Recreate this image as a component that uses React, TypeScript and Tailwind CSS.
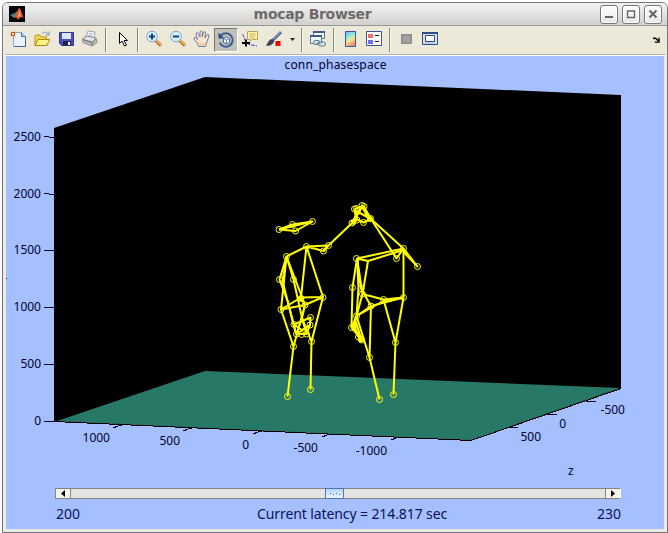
import type { ReactNode } from "react";

type Point = [number, number];

const leftDancer: Point[][] = [
  [[279, 229.5], [292.5, 224.5], [312.5, 221.5], [295.5, 231], [279, 229.5]],
  [[279, 229.5], [312.5, 221.5]],
  [[286.5, 256.5], [306.5, 246.5], [328.5, 245.5], [323.5, 251], [306.5, 246.5]],
  [[323.5, 251], [328.5, 245.5], [352, 223]],
  [[306.5, 246.5], [323, 297], [301, 297.5], [306.5, 246.5]],
  [[286.5, 256.5], [279.5, 279.5], [288, 302], [296, 334]],
  [[286.5, 256.5], [293.5, 279.5], [302, 318]],
  [[286.5, 256.5], [281, 309.5], [301, 297.5]],
  [[286.5, 256.5], [305, 305]],
  [[286.5, 256.5], [282.5, 281], [293.5, 324.5]],
  [[281, 309.5], [305, 305], [323, 297]],
  [[301, 297.5], [305, 305]],
  [[281, 309.5], [293.5, 346.5], [287.5, 396.5]],
  [[323, 297], [311.5, 341.5], [310.5, 389.5]],
  [[293.5, 346.5], [305, 305], [302, 318], [311.5, 341.5]],
  [[293.5, 324.5], [310.5, 317.5], [310, 325], [306.5, 334], [296.5, 334], [293.5, 324.5]],
  [[302, 318], [296.5, 334], [310, 325], [302, 330], [293.5, 324.5]],
  [[302, 318], [306.5, 334]],
];

const rightDancer: Point[][] = [
  [[352, 223], [362, 206], [371, 219], [358, 212], [352, 223]],
  [[354.5, 209], [363.5, 206], [371, 219], [363.5, 222.5], [356, 219], [354.5, 209]],
  [[354.5, 209], [358.5, 214], [362, 206], [366, 214], [371, 219]],
  [[352, 223], [357, 214], [357, 220], [352, 223]],
  [[364, 206.5], [369, 220], [366, 215]],
  [[371, 219], [403.5, 248.5], [417.5, 266.5], [403.5, 252]],
  [[371, 219], [396.5, 258.5], [403.5, 248.5]],
  [[357, 258.5], [403.5, 248.5]],
  [[357, 258.5], [368, 261], [403.5, 250]],
  [[357, 258.5], [352.5, 287.5], [351.5, 327.5]],
  [[357, 258.5], [358.5, 288], [356.5, 316]],
  [[357, 258.5], [362.5, 294], [356.5, 316]],
  [[357, 258.5], [361, 288.5], [371, 306]],
  [[368, 261], [362.5, 294], [383.5, 299.5], [403.5, 297.5]],
  [[356.5, 316], [371, 306], [403.5, 297.5], [403.5, 248.5]],
  [[356.5, 316], [383.5, 301], [403.5, 297.5]],
  [[371, 306], [369.5, 357.5], [379.5, 399.5]],
  [[356.5, 316], [369.5, 357.5]],
  [[383.5, 299.5], [395.5, 342.5], [393.5, 394.5]],
  [[403.5, 297.5], [395.5, 342.5]],
  [[356.5, 316], [351.5, 327.5], [361.5, 340], [356, 322], [354, 329], [358.5, 337], [361.5, 340]],
  [[356.5, 316], [354, 327], [361.5, 340]],
];

const markers: Point[] = [
  [279, 229.5], [292.5, 224.5], [312.5, 221.5], [295.5, 231],
  [286.5, 256.5], [306.5, 246.5], [328.5, 245.5], [323.5, 251],
  [279.5, 279.5], [293.5, 279.5], [281, 309.5], [301, 298.5], [305, 305], [323, 297.5],
  [310.5, 317.5], [294, 324.5], [310, 325], [306.5, 334], [296.5, 334], [301.5, 334.5],
  [293.5, 346.5], [311.5, 341.5], [287.5, 396.5], [310.5, 389.5],
  [354.5, 209], [356.5, 208.5], [362, 205.5], [364, 206.5], [352, 223], [357, 220], [363.5, 222.5], [370.5, 218.5],
  [403.5, 248.5], [396.5, 258.5], [417.5, 266.5], [356.5, 258.5],
  [352.5, 287.5], [361, 288.5], [362.5, 294], [403.5, 297.5], [383.5, 299.5],
  [371, 306], [356.5, 316], [351.5, 327.5], [354.5, 327.5], [358.5, 337], [361.5, 340],
  [369.5, 357.5], [395.5, 342.5], [379.5, 399.5], [393.5, 394.5],
];

// Joints where many limb segments meet read as solid dots.
const knots: Point[] = [[353.5, 222], [370, 219], [354, 327], [361, 339.5], [301, 298.5]];

const leftTicks = [
  { y: 137, label: "2500", drop: 1 },
  { y: 194, label: "2000", drop: 1 },
  { y: 250, label: "1500", drop: 0 },
  { y: 307, label: "1000", drop: 0 },
  { y: 364, label: "500", drop: 0 },
  { y: 421, label: "0", drop: 0 },
];

const floorLabels = [
  { x: 110, y: 441.5, label: "1000" },
  { x: 180, y: 444.5, label: "500" },
  { x: 249, y: 448.5, label: "0" },
  { x: 318, y: 451.5, label: "-500" },
  { x: 387, y: 454.5, label: "-1000" },
  { x: 541, y: 441, label: "500" },
  { x: 566, y: 428, label: "0" },
  { x: 625, y: 414, label: "-500" },
];

const frontTicks: Point[] = [[122, 425], [192, 428], [262, 431], [331, 434], [400, 437]];
const sideTicks: Point[] = [[508, 427], [547, 414], [586, 401]];

function Plot() {
  return (
    <svg className="block h-[432px] w-[658px] shrink-0" viewBox="6 56 658 432">
      <polygon points="54,128 205,77 621,95 621,388 471,440 54,421" fill="#000" />
      <polygon points="57,421 205,371 620,388 471,440" fill="#287868" />
      <path d="M54 421.5L471 440.5L621 388.5" fill="none" stroke="#000" shapeRendering="crispEdges" />
      <g fill="none" stroke="#000020" shapeRendering="crispEdges">
        {leftTicks.map((t) => (
          <path key={t.label} d={t.drop ? `M44 ${t.y - 0.5}H49M49 ${t.y + 0.5}H55` : `M44 ${t.y + 0.5}H55`} />
        ))}
        {frontTicks.map(([x, y]) => (
          <path key={x} d={`M${x} ${y}l-4 1l-5 2`} />
        ))}
        {sideTicks.map(([x, y]) => (
          <path key={x} d={`M${x} ${y + 0.5}h10`} />
        ))}
      </g>
      <g fill="#000030" className="font-['Noto_Sans',sans-serif] text-[12px]">
        <text x="335.5" y="69" textAnchor="middle" textLength="102">conn_phasespace</text>
        {leftTicks.map((t) => (
          <text key={t.label} x="41" y={t.y + 4} textAnchor="end">{t.label}</text>
        ))}
        {floorLabels.map((t) => (
          <text key={t.x} x={t.x} y={t.y} textAnchor="end">{t.label}</text>
        ))}
        <text x="568" y="475">z</text>
      </g>
      <path d="M6 278.5h1" stroke="#000030" />
      <g fill="none" stroke="#ff0" strokeWidth="2" strokeLinejoin="round">
        {[...leftDancer, ...rightDancer].map((line, i) => (
          <polyline key={i} points={line.map((p) => p.join(",")).join(" ")} />
        ))}
      </g>
      <g fill="none" stroke="#ff0" strokeWidth="1">
        {markers.map(([x, y], i) => (
          <circle key={i} cx={x} cy={y} r="3" />
        ))}
      </g>
      <g fill="#ff0">
        {knots.map(([x, y], i) => (
          <circle key={i} cx={x} cy={y} r="2.8" />
        ))}
      </g>
    </svg>
  );
}

function Tool({ children, active = false }: { children: ReactNode; active?: boolean }) {
  return (
    <button
      className={
        active
          ? "flex h-6 w-6 shrink-0 items-center justify-center border border-[#777770] border-r-white border-b-white bg-[#c1c0b8]"
          : "flex h-6 w-6 shrink-0 items-start justify-center pt-[2px]"
      }
    >
      <svg className="h-[18px] w-[18px] shrink-0" viewBox="0 0 18 18" fill="none">
        {children}
      </svg>
    </button>
  );
}

function Separator() {
  return (
    <div className="flex h-6 w-2 shrink-0 pl-[3px]">
      <div className="h-6 w-px bg-[#85847a]" />
      <div className="h-6 w-px bg-[#faf9f2]" />
    </div>
  );
}

function Lens({ plus = false }: { plus?: boolean }) {
  return (
    <>
      <path d="M10.5 10.5l5.5 5" stroke="#b8762d" strokeWidth="3.4" />
      <path d="M10.8 10l5.5 5" stroke="#f3b96c" strokeWidth="1.6" />
      <circle cx="7" cy="6.5" r="5.3" fill="#d2f1fa" stroke="#8a9fd2" />
      <path d="M4 6.5h6" stroke="#183c78" strokeWidth="2" />
      {plus && <path d="M7 3.5v6" stroke="#183c78" strokeWidth="2" />}
    </>
  );
}

function Toolbar() {
  return (
    <div className="flex h-[30px] shrink-0 items-start border-b border-white bg-[#ece9d8] pt-[2px] shadow-[inset_0_-1px_0_#b4b2a6]">
      <Tool>
        <path d="M4.5 2.5h8l4 4v10h-12z" fill="#eaf4ff" stroke="#8fa3cc" />
        <path d="M12.5 2.5v4h4" fill="#a9c5ee" stroke="#536fae" />
        <path d="M5 16.5h11.5V7" stroke="#4a629c" />
        <path d="M4 0v8M0 4h8M1 1l6 6M7 1L1 7" stroke="#f3b896" strokeWidth=".8" />
        <rect x="2.5" y="2.5" width="3" height="3" fill="#ffe990" stroke="#d65516" />
      </Tool>
      <Tool>
        <path d="M2 15.5v-9l1-1.500h4l1.500 2h5v2" fill="#f4d65d" stroke="#b8920c" />
        <path d="M2 15.500l3-6h11.500l-2.500 6z" fill="#ffef8d" stroke="#b28a00" />
        <path d="M9 4c2-3 5-2 6.500.500M16 1.500v3.500h-3.500" stroke="#8494aa" />
      </Tool>
      <Tool>
        <path d="M2.500 2.500h14v13h-12l-2-2z" fill="#4d50b9" stroke="#34358c" />
        <path d="M5 3h9v6H5z" fill="#dbe9ff" />
        <path d="M6 11h8v4.500H6z" fill="#20204f" />
        <path d="M11 12h2v3h-2z" fill="#fff" />
      </Tool>
      <Tool>
        <path d="M5 7l2-6 7 1-1 7" fill="#f8faff" stroke="#9ea6b4" />
        <path d="M8 3.500l4 .5M7.500 5.500l4 .5" stroke="#8295b8" strokeWidth=".8" />
        <path d="M1.500 9l4-3 9.500 2 1 4.500-5 3.500-9-3.500z" fill="#b8bbc0" stroke="#8b8e94" />
        <path d="M2 9.500l9 3 4-4M11 12.500v3" stroke="#666a71" />
        <path d="M3 9l3-2 8 1.500-2.500 2.500z" fill="#e4e6ea" />
        <path d="M12.500 13h2" stroke="#b7c93d" strokeWidth="1.500" />
      </Tool>
      <Separator />
      <Tool>
        <path d="M6.500 2.500v11l2.500-2.500 2.500 5 2-1-2.500-4.500h3.500z" fill="#fff" stroke="#000" />
      </Tool>
      <Separator />
      <Tool><Lens plus /></Tool>
      <Tool><Lens /></Tool>
      <Tool>
        <path d="M5.500 16.500l-1-3L1 9c-.5-2 1-2 2-1l1.500 1.500L3 4c0-2 2-2 2.500 0L7 7V2.500c0-2 2-2 2.300 0V7l1.200-4.500c.5-1.500 2.200-1 2 .5L12 8l2-3c1-1.500 2.500 0 2 1l-2.500 7-1 3.500z" fill="#ffe5cd" stroke="#5b6f9e" strokeWidth=".9" />
        <path d="M6 15.500h6l1-3-4 1-4-1z" fill="#f5c8a0" />
      </Tool>
      <Tool active>
        <path d="M4 4.500a6.700 6.700 0 1 1-1.300 7" stroke="#3f5c8e" strokeWidth="2" />
        <path d="M1.500 1.500v6h6z" fill="#304b7f" />
        <path d="M6.500 7.500l3-1.500 3 1.500v4l-3 1.500-3-1.500z" fill="#dff4ff" stroke="#3f5c8e" strokeWidth=".9" />
        <path d="M6.500 7.500l3 1.500 3-1.500M9.500 9v4" stroke="#5f84b0" strokeWidth=".9" />
      </Tool>
      <Tool>
        <path d="M6.500 1.500h10v8H11l-2 2v-2H6.500z" fill="#fff4a6" stroke="#b3a65e" />
        <path d="M8.500 4h6M8.500 6h6M8.500 8h5" stroke="#b4a65b" strokeWidth=".8" />
        <path d="M1 4c2 1 2 5 4 8s6 3 11 4" stroke="#3838e8" strokeDasharray="4 1" />
        <path d="M1 13h8M5 9.500v7" stroke="#000" strokeWidth="2" />
      </Tool>
      <Tool>
        <path d="M16 2L7.500 10.500" stroke="#405987" strokeWidth="2.800" />
        <path d="M16 1.500L8 9.500" stroke="#c2d8f0" />
        <path d="M8 9.500c-4-1.500-4 2-7 6 4 1 7-1 8-4z" fill="#3c4250" />
        <path d="M10.500 11h5v5h-5z" fill="#ef0000" />
      </Tool>
      <button className="flex h-6 w-3 shrink-0 items-start justify-center pt-[10px]">
        <svg className="h-[3px] w-[5px]" viewBox="0 0 5 3"><path d="M0 0h5L2.500 3z" fill="#222" /></svg>
      </button>
      <Separator />
      <Tool>
        <path d="M4.500 1.500h11v7h-11z" fill="#fff" stroke="#5a73a5" />
        <path d="M4 2h12" stroke="#405b93" strokeWidth="2" />
        <path d="M1.500 5.500h11v8h-11z" fill="#eef7ff" stroke="#5a73a5" />
        <path d="M1 6h12" stroke="#405b93" strokeWidth="2" />
        <rect x="4.500" y="10.500" width="6.500" height="4" rx="2" fill="#d7e5ec" stroke="#5c7688" />
        <rect x="9.500" y="12" width="7" height="4" rx="2" fill="#d7e5ec" stroke="#5c7688" />
        <path d="M7.500 13h5" stroke="#5c7688" />
      </Tool>
      <Separator />
      <Tool>
        <defs>
          <linearGradient id="spectrum" x1="0" y1="0" x2=".4" y2="1">
            <stop stopColor="#839af1" />
            <stop offset=".35" stopColor="#83e8eb" />
            <stop offset=".65" stopColor="#f5e890" />
            <stop offset="1" stopColor="#f4906d" />
          </linearGradient>
        </defs>
        <path d="M4.500 1.500h10v15h-10z" fill="url(#spectrum)" stroke="#3c5793" />
      </Tool>
      <Tool>
        <path d="M1.500 1.500h15v14h-15z" fill="#fff" stroke="#3c5793" />
        <path d="M3 4h5v4H3z" fill="#f06a6a" />
        <path d="M3 10h5v4H3z" fill="#6e6eed" />
        <path d="M10 5.500h4M10 11.500h4" stroke="#111" />
      </Tool>
      <Separator />
      <Tool>
        <path d="M4.500 4.500h10v9h-10z" fill="#999" stroke="#898989" />
        <path d="M6 6h7v6H6z" fill="#a2a2a2" />
      </Tool>
      <Tool>
        <path d="M1.500 2.500h15v12h-15z" fill="#d8e2f0" stroke="#304d86" />
        <path d="M1 3h16" stroke="#304d86" strokeWidth="2" />
        <path d="M4.500 5.500h9v6h-9z" fill="#fff" stroke="#304d86" />
        <path d="M4 13h10" stroke="#a4b5d0" />
      </Tool>
      <svg className="mt-[9px] mr-[5px] ml-auto h-[6px] w-[7px] shrink-0" viewBox="0 0 8 7">
        <path d="M0 1.500h3l3 3M1 .500v2M7 1v5H2" fill="none" stroke="#000" strokeWidth="1.600" />
      </svg>
    </div>
  );
}

function WindowButton({ kind }: { kind: "minimize" | "maximize" | "close" }) {
  return (
    <button className="flex h-[19px] w-[18px] items-center justify-center rounded-[3px] border border-[#777] bg-gradient-to-b from-white to-[#e7e7e5] shadow-[inset_0_0_0_1px_#fff]">
      <svg className="h-[10px] w-[10px] shrink-0" viewBox="0 0 10 10" fill="none" stroke="#656565">
        {kind === "minimize" && <path d="M1 8h8" strokeWidth="2" />}
        {kind === "maximize" && <path d="M1.500 2h7v6.500h-7zM1 2h8" strokeWidth="1.300" />}
        {kind === "close" && <path d="M1.500 1.500l7 7M8.500 1.500l-7 7" strokeWidth="2" />}
      </svg>
    </button>
  );
}

function TitleBar() {
  return (
    <div className="flex h-[23px] shrink-0 items-center rounded-t-[5px] border-b border-[#969696] bg-gradient-to-b from-[#f3f3f2] to-[#d2d1ce] pr-[5px] pl-[6px]">
      <svg className="h-4 w-4 shrink-0" viewBox="0 0 16 16">
        <path d="M0 0h16v16H0z" fill="#050609" />
        <path d="M1 9l5-2 2-2 1 5-4 2z" fill="#43818c" />
        <path d="M5 11c3-2 4-9 5-9 2 1 3 7 5 10-3-2-4-1-6 2-1-2-2-3-4-3z" fill="#ed5723" />
        <path d="M9 11c1-3 1-6 1-8l1.500 7z" fill="#ffc08a" />
      </svg>
      <div className="flex-1 text-center font-['DejaVu_Sans',sans-serif] text-[14px] leading-[20px] font-bold tracking-[-0.3px] text-[#6c6b6a]">
        mocap Browser
      </div>
      <div className="flex gap-1">
        <WindowButton kind="minimize" />
        <WindowButton kind="maximize" />
        <WindowButton kind="close" />
      </div>
    </div>
  );
}

function LatencySlider() {
  return (
    <div className="mr-[43px] ml-[49px] flex h-[11px] shrink-0 border border-[#858580] border-r-white border-b-[#858580] bg-[#e5e4e3]">
      <button className="flex w-[15px] items-center justify-center border-r border-[#858580] bg-[#f5f4ec]">
        <svg className="h-[7px] w-1" viewBox="0 0 4 7"><path d="M4 0v7L0 3.500z" /></svg>
      </button>
      <div className="flex flex-1 pl-[255px]">
        <div className="flex h-[9px] w-[17px] items-center justify-center gap-[2px] bg-gradient-to-b from-[#b5d5ff] to-[#eef7ff] shadow-[0_0_0_1px_#4c75bd]">
          <span className="h-px w-px bg-[#315d94]" />
          <span className="mt-[2px] h-px w-px bg-[#315d94]" />
          <span className="h-px w-px bg-[#315d94]" />
          <span className="mt-[2px] h-px w-px bg-[#315d94]" />
        </div>
      </div>
      <button className="flex w-[15px] items-center justify-center border-l border-[#858580] bg-[#f5f4ec]">
        <svg className="h-[7px] w-1" viewBox="0 0 4 7"><path d="M0 0v7l4-3.500z" /></svg>
      </button>
    </div>
  );
}

export default function App() {
  return (
    <div className="h-[533px] w-[668px] overflow-hidden bg-white pt-[2px] pl-[2px]">
      <div className="flex h-[531px] w-[666px] flex-col rounded-t-[6px] border border-[#777] bg-[#eceae5]">
        <TitleBar />
        <div className="mr-[2px] ml-[3px] flex h-[503px] flex-col">
          <Toolbar />
          <div className="flex h-[473px] w-[658px] shrink-0 flex-col bg-[#a6c0ff]">
            <Plot />
            <LatencySlider />
            <div className="mr-[43px] ml-[50px] grid grid-cols-[201px_1fr_auto] items-center pt-[5px] font-['Noto_Sans',sans-serif] text-[14px] leading-5 text-[#09105c]">
              <span>200</span>
              <span className="tracking-[-0.1px]">Current latency = 214.817 sec</span>
              <span>230</span>
            </div>
          </div>
        </div>
      </div>
    </div>
  );
}
